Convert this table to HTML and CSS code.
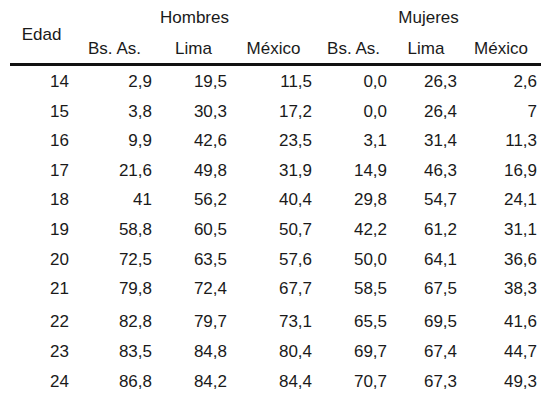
FILE: index.html
```html
<!DOCTYPE html>
<html lang="es">
<head>
<meta charset="utf-8">
<title>Tabla</title>
<link rel="stylesheet" href="styles.css">
</head>
<body>
<table class="data">
  <colgroup>
    <col class="c-edad"><col class="c-ba"><col class="c-li"><col class="c-mx"><col class="c-ba2"><col class="c-li2"><col class="c-mx2">
  </colgroup>
  <thead>
    <tr class="h1">
      <th rowspan="2" class="edad">Edad</th>
      <th colspan="3">Hombres</th>
      <th colspan="3">Mujeres</th>
    </tr>
    <tr class="h2">
      <th>Bs. As.</th><th>Lima</th><th>México</th>
      <th>Bs. As.</th><th>Lima</th><th>México</th>
    </tr>
  </thead>
  <tbody>
    <tr class="first"><td>14</td><td>2,9</td><td>19,5</td><td>11,5</td><td>0,0</td><td>26,3</td><td>2,6</td></tr>
    <tr><td>15</td><td>3,8</td><td>30,3</td><td>17,2</td><td>0,0</td><td>26,4</td><td>7</td></tr>
    <tr><td>16</td><td>9,9</td><td>42,6</td><td>23,5</td><td>3,1</td><td>31,4</td><td>11,3</td></tr>
    <tr><td>17</td><td>21,6</td><td>49,8</td><td>31,9</td><td>14,9</td><td>46,3</td><td>16,9</td></tr>
    <tr><td>18</td><td>41</td><td>56,2</td><td>40,4</td><td>29,8</td><td>54,7</td><td>24,1</td></tr>
    <tr><td>19</td><td>58,8</td><td>60,5</td><td>50,7</td><td>42,2</td><td>61,2</td><td>31,1</td></tr>
    <tr><td>20</td><td>72,5</td><td>63,5</td><td>57,6</td><td>50,0</td><td>64,1</td><td>36,6</td></tr>
    <tr><td>21</td><td>79,8</td><td>72,4</td><td>67,7</td><td>58,5</td><td>67,5</td><td>38,3</td></tr>
    <tr class="spaced"><td>22</td><td>82,8</td><td>79,7</td><td>73,1</td><td>65,5</td><td>69,5</td><td>41,6</td></tr>
    <tr><td>23</td><td>83,5</td><td>84,8</td><td>80,4</td><td>69,7</td><td>67,4</td><td>44,7</td></tr>
    <tr><td>24</td><td>86,8</td><td>84,2</td><td>84,4</td><td>70,7</td><td>67,3</td><td>49,3</td></tr>
  </tbody>
</table>
</body>
</html>
```

FILE: styles.css
```css
html, body {
  margin: 0;
  padding: 0;
  background: #ffffff;
}

body {
  font-family: "Liberation Sans", Arial, Helvetica, sans-serif;
  font-size: 17px;
  color: #1a1a1a;
}

.data {
  margin-left: 10px;
  width: 531px;
  table-layout: fixed;
  border-collapse: separate;
  border-spacing: 0;
}

.c-edad { width: 63px; }
.c-ba   { width: 83px; }
.c-li   { width: 75px; }
.c-mx   { width: 85px; }
.c-ba2  { width: 75px; }
.c-li2  { width: 70px; }
.c-mx2  { width: 80px; }

.data th {
  font-weight: normal;
  text-align: center;
  line-height: 20px;
  padding: 0;
  white-space: nowrap;
}

.h1 th {
  padding-top: 8px;
  padding-bottom: 11px;
}

.h2 th {
  padding-bottom: 4px;
}

.h2 th,
.data th.edad {
  border-bottom: 3px solid #111111;
}

.data th.edad {
  vertical-align: middle;
  padding-top: 10px;
  padding-bottom: 4px;
}

.data td {
  text-align: right;
  padding: 0 4px 0 0;
  line-height: 29.6px;
  white-space: nowrap;
}

.data tr.first td {
  padding-top: 1px;
}

.data tr.spaced td {
  padding-top: 3.7px;
}
```
